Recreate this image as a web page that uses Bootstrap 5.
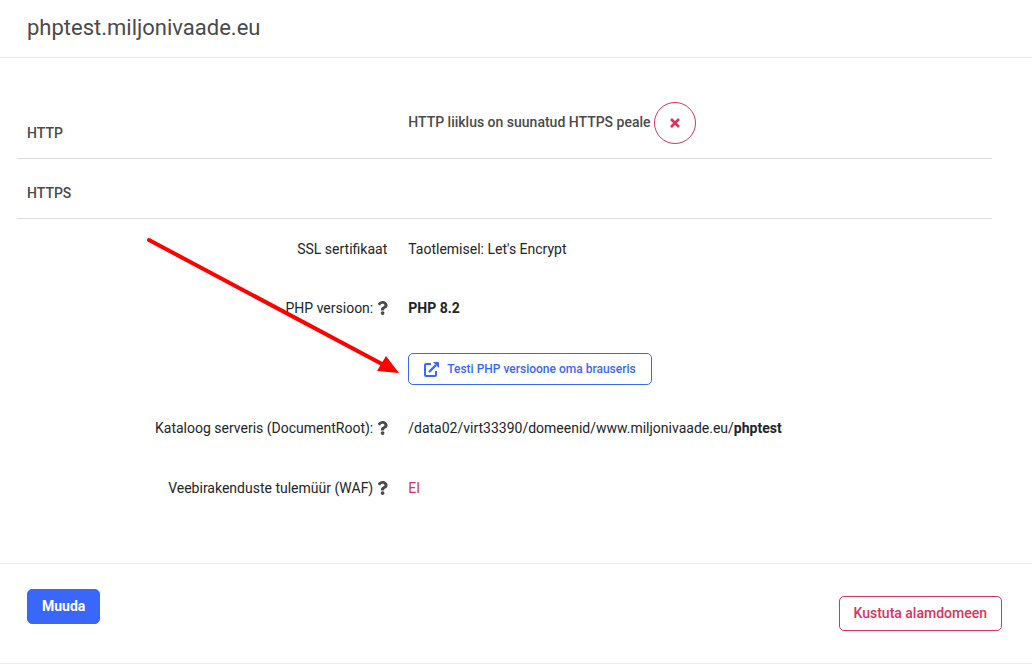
<!DOCTYPE html>
<html lang="et">
<head>
<meta charset="utf-8">
<meta name="viewport" content="width=device-width, initial-scale=1">
<title>phptest.miljonivaade.eu</title>
<link href="https://cdn.jsdelivr.net/npm/bootstrap@5.3.0/dist/css/bootstrap.min.css" rel="stylesheet">
<style>
  body { font: 400 14px/21px Roboto, "Liberation Sans", sans-serif; color: #212529; background: #fff; }
  .panel-line { border-bottom: 1px solid #ebebeb; }
  .page-title { font-size: 22px; line-height: 33px; color: #4a4a4a; padding: 11px 27px 13px; }
  .details { padding: 41px 40px 44px 17px; }
  .group-row { min-height: 60px; padding-bottom: 14px; border-bottom: 1px solid #dbdbdb; font-weight: 500; color: #4a4a4a; }
  .field-row { min-height: 60px; }
  .field-row.has-help { padding-bottom: 2px; }
  .term { flex: 0 0 39%; padding: 0 10px; }
  .has-help .term { padding-right: 9px; }
  .value { padding-left: 11px; }
  .help { color: #4a4a4a; line-height: 0; margin-left: 4px; }
  .btn { --bs-btn-font-size: 14px; --bs-btn-line-height: 21px; --bs-btn-font-weight: 500; --bs-btn-padding-x: 14px; --bs-btn-padding-y: 6px; --bs-btn-border-radius: 5px; }
  .btn-edit { --bs-btn-color: #fff; --bs-btn-bg: #3a67fb; --bs-btn-border-color: #3a67fb; --bs-btn-hover-color: #fff; --bs-btn-hover-bg: #2a55e0; --bs-btn-font-weight: 700; }
  .btn-test { --bs-btn-font-size: 12px; --bs-btn-line-height: 20px; --bs-btn-padding-x: 15px; --bs-btn-padding-y: 5px; --bs-btn-color: #3a67fb; --bs-btn-border-color: #3a67fb; --bs-btn-hover-color: #fff; --bs-btn-hover-bg: #3a67fb; }
  .btn-remove { --bs-btn-color: #d9345b; --bs-btn-border-color: #d9345b; --bs-btn-hover-color: #fff; --bs-btn-hover-bg: #d9345b; }
  .btn-round { --bs-btn-border-radius: 50%; --bs-btn-padding-x: 0; --bs-btn-padding-y: 0; width: 42px; height: 42px; margin-left: 3px; }
  .redirect-note { padding-bottom: 2px; }
  .off { color: #d9345b; }
  .actions { padding: 25px 30px 32px 27px; }
  .btn-delete { margin-top: 7px; }
  .pointer { left: 146px; top: 179px; pointer-events: none; }
</style>
</head>
<body>
<svg class="d-none" aria-hidden="true">
  <symbol id="question" viewBox="0 0 384 512"><path fill="currentColor" d="M202 0C122 0 70 33 29 91c-7 10-5 25 5 33l44 34c11 8 26 6 34-4 25-32 44-50 83-50 31 0 69 20 69 50 0 22-19 34-49 51-35 20-81 44-81 105v10c0 13 11 24 24 24h73c13 0 24-11 24-24v-6c0-42 123-44 123-158C378 70 289 0 202 0zm-7 374a69 69 0 1 0 0 138 69 69 0 0 0 0-138z"/></symbol>
</svg>

<header class="panel-line">
  <h1 class="page-title fw-normal mb-0">phptest.miljonivaade.eu</h1>
</header>

<main class="details panel-line position-relative">
  <section>
    <div class="group-row d-flex align-items-end">
      <div class="term">HTTP</div>
      <div class="value d-flex align-items-center">
        <span class="redirect-note">HTTP liiklus on suunatud HTTPS peale</span>
        <button type="button" class="btn btn-remove btn-round d-flex align-items-center justify-content-center" aria-label="Eemalda suunamine">
          <svg width="10" height="10" viewBox="0 0 10 10" aria-hidden="true"><path d="M1 1l8 8M9 1L1 9" stroke="currentColor" stroke-width="2.6"/></svg>
        </button>
      </div>
    </div>
  </section>

  <section>
    <div class="group-row d-flex align-items-end">
      <div class="term">HTTPS</div>
    </div>
    <div class="field-row d-flex align-items-center">
      <div class="term text-end">SSL sertifikaat</div>
      <div class="value">Taotlemisel: Let's Encrypt</div>
    </div>
    <div class="field-row has-help d-flex align-items-center">
      <div class="term d-flex justify-content-end align-items-center">PHP versioon:
        <span class="help"><svg width="11" height="14" aria-hidden="true"><use href="#question"/></svg></span></div>
      <div class="value fw-bold">PHP 8.2</div>
    </div>
    <div class="field-row d-flex align-items-center">
      <div class="term"></div>
      <div class="value">
        <button type="button" class="btn btn-test d-flex align-items-center">
          <svg class="me-2" width="15" height="15" viewBox="0 0 15 15" fill="none" stroke="currentColor" aria-hidden="true">
            <path d="M7 2H2a1 1 0 0 0-1 1v10a1 1 0 0 0 1 1h9a1 1 0 0 0 1-1V9" stroke-width="2"/>
            <path d="M5 10L12 3" stroke-width="2.4"/>
            <path d="M9 0h5q1 0 1 1v5z" fill="currentColor" stroke="none"/>
          </svg>
          Testi PHP versioone oma brauseris
        </button>
      </div>
    </div>
    <div class="field-row has-help d-flex align-items-center">
      <div class="term d-flex justify-content-end align-items-center">Kataloog serveris (DocumentRoot):
        <span class="help"><svg width="11" height="14" aria-hidden="true"><use href="#question"/></svg></span></div>
      <div class="value">/data02/virt33390/domeenid/www.miljonivaade.eu/<b>phptest</b></div>
    </div>
    <div class="field-row has-help d-flex align-items-center">
      <div class="term d-flex justify-content-end align-items-center">Veebirakenduste tulemüür (WAF)
        <span class="help"><svg width="11" height="14" aria-hidden="true"><use href="#question"/></svg></span></div>
      <div class="value off">EI</div>
    </div>
  </section>

  <svg class="pointer position-absolute" width="256" height="140" viewBox="0 0 256 140" aria-hidden="true">
    <path d="M3 3L236 127" stroke="#f00" stroke-width="4" stroke-linecap="round"/>
    <path d="M253 136L240 119 231 134z" fill="#f00"/>
  </svg>
</main>

<footer class="actions panel-line d-flex justify-content-between align-items-start">
  <button type="button" class="btn btn-edit">Muuda</button>
  <button type="button" class="btn btn-remove btn-delete">Kustuta alamdomeen</button>
</footer>
<script src="https://cdn.jsdelivr.net/npm/bootstrap@5.3.0/dist/js/bootstrap.bundle.min.js"></script>
</body>
</html>
